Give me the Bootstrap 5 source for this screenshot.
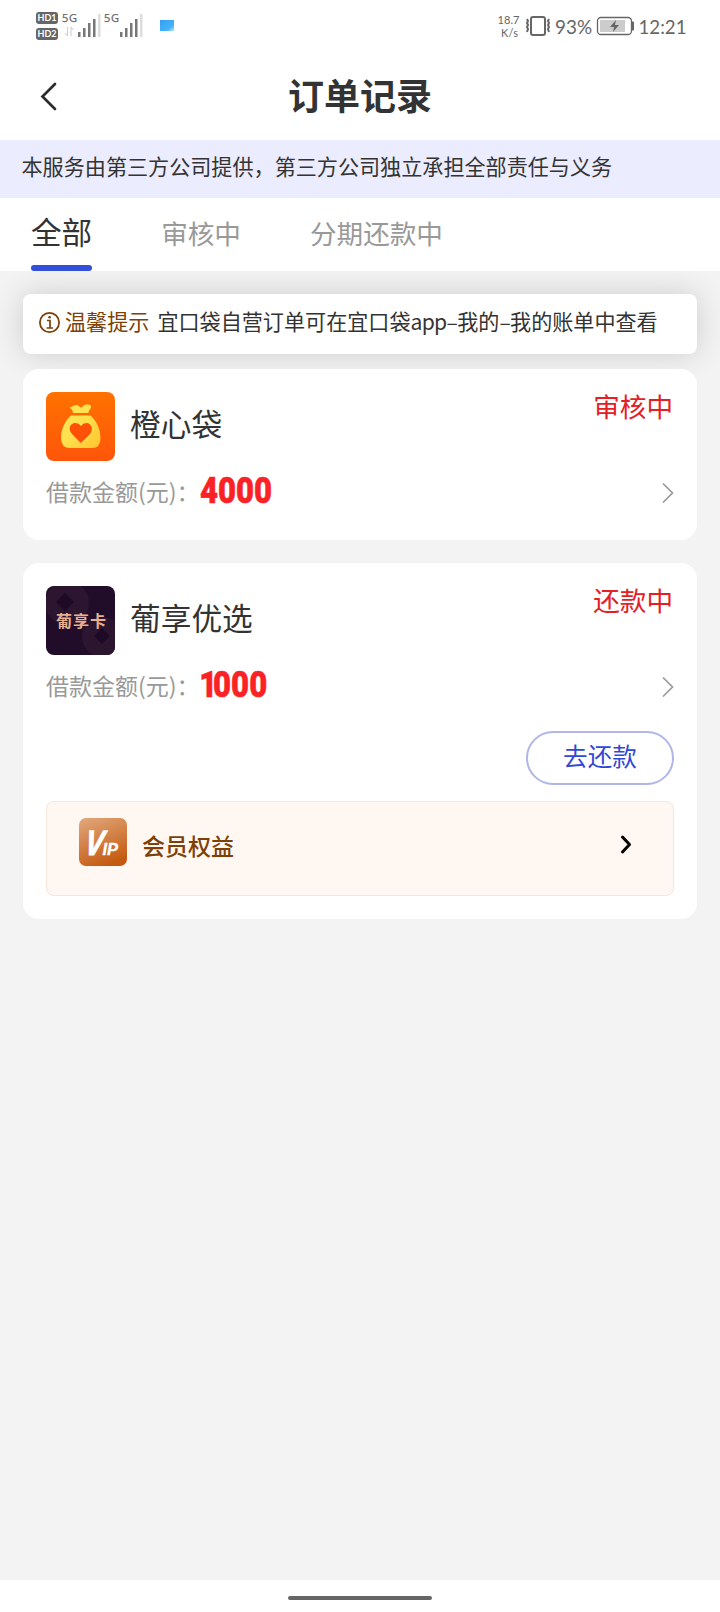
<!DOCTYPE html>
<html lang="zh-CN">
<head>
<meta charset="utf-8">
<meta name="viewport" content="width=device-width, initial-scale=1">
<title>订单记录</title>
<link href="https://cdn.jsdelivr.net/npm/bootstrap@5.3.0/dist/css/bootstrap.min.css" rel="stylesheet">
<style>
body{font-family:"Noto Sans CJK SC","Noto Sans",sans-serif;background:#f3f3f3;color:#333;min-height:1612px}
svg{display:block;flex:none}
.status-row{height:54px}
.title-row{height:86px;padding:0 60px 0 36px}
.title-row h1{font-size:36px;line-height:81px;font-weight:700;color:#333}
.notice{height:58px;padding-left:21.5px;font-size:21.1px;line-height:52px;background:#ebecfd}
.tabs-row{height:73px;padding-left:31px;gap:69px;z-index:1}
.tab-item{font-size:26.6px;line-height:32px;color:#999;padding:0 0 4px;background:none;border:0}
.tab-item.active{font-size:30.6px;padding-bottom:8px;color:#333;position:relative}
.tab-item.active::after{content:"";position:absolute;left:0;right:0;bottom:0;height:6px;border-radius:3px;background:#3350dc}
.content{padding:23px 23px 0}
.tip{height:60px;border-radius:8px;padding-left:15px;font-size:21.1px;line-height:54px;box-shadow:0 0 30px rgba(0,0,0,.16)}
.latin{letter-spacing:-.7px}
.brown{color:#7d4006}
.order{border:0;border-radius:16px;padding:23px}
.order-name{font-size:30.7px;line-height:40px;margin-left:15px;padding-bottom:7px}
.order-state{font-size:26.6px;line-height:28px;color:#e52025;margin-right:1px}
.amount-row{height:56px}
.amount-label{font-size:23px;line-height:32px;color:#999;padding-top:4px}
.amount{font-family:Roboto,sans-serif;font-weight:900;font-size:37.5px;line-height:40px;color:#fb2226;-webkit-text-stroke:.6px #fb2226;padding-top:1px;transform:scaleX(.83);transform-origin:0 50%}
.go{margin-top:8px}
.one{margin:0 -5px 0 -1px}
.btn-repay{width:148px;height:54px;border:2px solid #b0b7e8;border-radius:27px;color:#2f48d8;font-size:24.6px;line-height:30px;padding:0 0 7px}
.vip-box{height:95px;margin-top:16px;border:1px solid #f7e6da;border-radius:8px;background:#fff7f1;padding:16px 41px 0 32px}
.vip-box span{font-size:23px;line-height:54px;margin-left:15px}
.home-bar{height:32px}
.home-bar div{width:144px;height:4px;border-radius:2px;background:#666;margin-top:16px}
</style>
</head>
<body class="d-flex flex-column">
<header class="bg-white">
  <div class="status-row">
    <svg width="720" height="54" font-family="Lato, sans-serif" fill="#666">
      <rect x="36" y="12" width="22" height="12" rx="3"/><rect x="36" y="28" width="22" height="12" rx="3"/>
      <g fill="#fff" font-size="9" font-weight="700" text-anchor="middle"><text x="47" y="21.300">HD1</text><text x="47" y="37.300">HD2</text></g>
      <g font-size="11" font-family="Open Sans, sans-serif" stroke="#666" stroke-width=".25"><text x="62" y="22" textLength="15">5G</text><text x="104" y="22" textLength="15">5G</text></g>
      <path d="M67.500 27v9l-2.500-3M71 36v-9l2.500 3" fill="none" stroke="#ccc"/>
      <g id="bars"><path d="M78 32h2.500v5H78zM83 28h2.500v9H83zM88 23h2.500v14H88zM93 19h2.500v18H93z" fill="#777"/><path d="M98 14h2.500v23H98z" fill="#ddd"/></g>
      <use href="#bars" x="42"/>
      <defs><linearGradient id="flag" y2="1"><stop stop-color="#32a0f0"/><stop offset=".7" stop-color="#45b3fa"/><stop offset="1" stop-color="#b5e0fc"/></linearGradient></defs>
      <path d="M160 20h14v11h-14z" fill="url(#flag)"/>
      <g font-size="11"><text x="497.500" y="24" textLength="22">18.7</text><text x="501" y="36.500" textLength="17">K/s</text></g>
      <rect x="531" y="17" width="14" height="18" rx="2" fill="none" stroke="#666" stroke-width="2"/>
      <path d="M527 19l1 2-1 2 1 2-1 2 1 2-1 3M549 19l-1 2 1 2-1 2 1 2-1 2 1 3" fill="none" stroke="#666" stroke-width="2"/>
      <text x="555" y="34" font-size="20" textLength="37" lengthAdjust="spacingAndGlyphs">93%</text>
      <rect x="597.500" y="17.500" width="34" height="17" rx="3.500" fill="none" stroke="#666" stroke-width="1.300"/>
      <rect x="600" y="20" width="25" height="12" fill="#ccc"/><path d="M632 22h1.500v8H632z" stroke="#666"/>
      <path d="M616 20l-6 7h4l-1 5 6-7h-4z"/>
      <text x="638.500" y="34" font-size="20" textLength="48" lengthAdjust="spacingAndGlyphs">12:21</text>
    </svg>
  </div>
  <div class="title-row d-flex align-items-start">
    <svg width="24" height="82" fill="none" stroke="#2c2c2c" stroke-width="2.700" stroke-linecap="round"><path d="M19 30L6.500 42.500L19 55"/></svg>
    <h1 class="flex-grow-1 text-center m-0">订单记录</h1>
  </div>
</header>
<div class="notice">本服务由第三方公司提供，第三方公司独立承担全部责任与义务</div>
<nav class="tabs-row d-flex bg-white position-relative">
  <button class="tab-item active">全部</button><button class="tab-item">审核中</button><button class="tab-item">分期还款中</button>
</nav>
<main class="content flex-grow-1">
  <div class="tip bg-white d-flex">
    <svg width="23" height="54" class="me-1" fill="none" stroke="#7d4006"><circle cx="11.500" cy="28.500" r="9.600" stroke-width="1.800"/><path d="M9 26.500h3v7.500M8.500 34h6.500" stroke-width="1.700"/><circle cx="11.600" cy="23.300" r="1.300" fill="#7d4006" stroke="none"/></svg>
    <span class="brown">温馨提示</span><span class="ms-2 text-nowrap">宜口袋自营订单可在宜口袋<span class="latin">app–</span>我的<span class="latin">–</span>我的账单中查看</span>
  </div>
  <section class="card order position-relative" style="margin-top:15px;height:171px">
    <div class="d-flex">
      <svg width="69" height="69" viewBox="0 0 69 69">
        <defs><linearGradient id="or" x2="0" y2="1"><stop stop-color="#ff7200"/><stop offset="1" stop-color="#ff550b"/></linearGradient><linearGradient id="ye" x2="1" y2="1"><stop stop-color="#ffe75a"/><stop offset=".5" stop-color="#ffe04c"/><stop offset="1" stop-color="#ffc42e"/></linearGradient></defs>
        <rect width="69" height="69" rx="8" fill="url(#or)"/>
        <path d="M27 21C27 18 25 17 23.500 15.500C26 15 28 13 31 13C33 13 33 15.500 35 15.500C37 15.500 37 12.500 40 12.500C43 12.500 45.500 12.500 45 15C44.500 18 42.500 18 42.500 21ZM25 23.500H44.500C50 28 54.500 37 54.500 46Q54.500 56 46 56H24Q15 56 15 46C15 37 19.500 28 25 23.500Z" fill="url(#ye)"/>
        <path d="M34.800 51L26 42C21 36 25 31 29 31Q33 31 34.800 34Q37 31 40.500 31C45 31 48 37 44 42Z" fill="#ff5008"/>
      </svg>
      <div class="order-name align-self-center">橙心袋</div><div class="order-state ms-auto">审核中</div>
    </div>
    <div class="amount-row d-flex align-items-center">
      <span class="amount-label">借款金额(元)：</span><span class="amount">4000</span>
      <svg class="ms-auto go" width="13" height="22" fill="none" stroke="#999" stroke-width="1.700"><path d="M2 1.500L11.500 11L2 20.500"/></svg>
    </div>
  </section>
  <section class="card order" style="margin-top:23px;height:356px">
    <div class="d-flex">
      <svg width="69" height="69" viewBox="0 0 69 69">
        <defs><clipPath id="round"><rect width="69" height="69" rx="8"/></clipPath></defs>
        <g clip-path="url(#round)"><path d="M0 0h69v69H0z" fill="#210c29"/><g fill="#2b152f"><circle cx="21" cy="17" r="22"/><circle cx="56" cy="51" r="20"/></g><path d="M19 7l9 9-9 9-9-9zM56 42l8 8-8 8-8-8z" fill="#1e0a26"/></g>
        <text x="10" y="40.500" font-size="16" font-weight="700" fill="#e8b08e" letter-spacing="1" font-family="Noto Sans CJK SC, sans-serif">葡享卡</text>
      </svg>
      <div class="order-name align-self-center">葡享优选</div><div class="order-state ms-auto">还款中</div>
    </div>
    <div class="amount-row d-flex align-items-center">
      <span class="amount-label">借款金额(元)：</span><span class="amount"><span class="one">1</span>000</span>
      <svg class="ms-auto go" width="13" height="22" fill="none" stroke="#999" stroke-width="1.700"><path d="M2 1.500L11.500 11L2 20.500"/></svg>
    </div>
    <button class="btn btn-repay align-self-end" style="margin-top:20px">去还款</button>
    <div class="vip-box d-flex align-items-start">
      <svg width="48" height="48">
        <defs><linearGradient id="vg" x1=".2" x2=".6" y2="1"><stop stop-color="#e0a477"/><stop offset="1" stop-color="#c4590f"/></linearGradient></defs>
        <rect width="48" height="48" rx="7" fill="url(#vg)"/>
        <g fill="#fff" stroke="#fff" font-family="Liberation Sans, sans-serif" font-style="italic" font-weight="700"><text transform="translate(5 36.500) skewX(-8) scale(.78 1)" font-size="35" stroke-width="1.200">V</text><text x="23.500" y="36.500" font-size="16.500" stroke-width=".3">IP</text></g>
      </svg>
      <span class="brown fw-medium">会员权益</span>
      <svg class="ms-auto" width="12" height="54" fill="none" stroke="#000" stroke-width="3" stroke-linecap="round" stroke-linejoin="round"><path d="M2.500 19L9.500 26.500L2.500 34"/></svg>
    </div>
  </section>
</main>
<footer class="home-bar bg-white d-flex justify-content-center"><div></div></footer>
<script src="https://cdn.jsdelivr.net/npm/bootstrap@5.3.0/dist/js/bootstrap.bundle.min.js"></script>
</body>
</html>
